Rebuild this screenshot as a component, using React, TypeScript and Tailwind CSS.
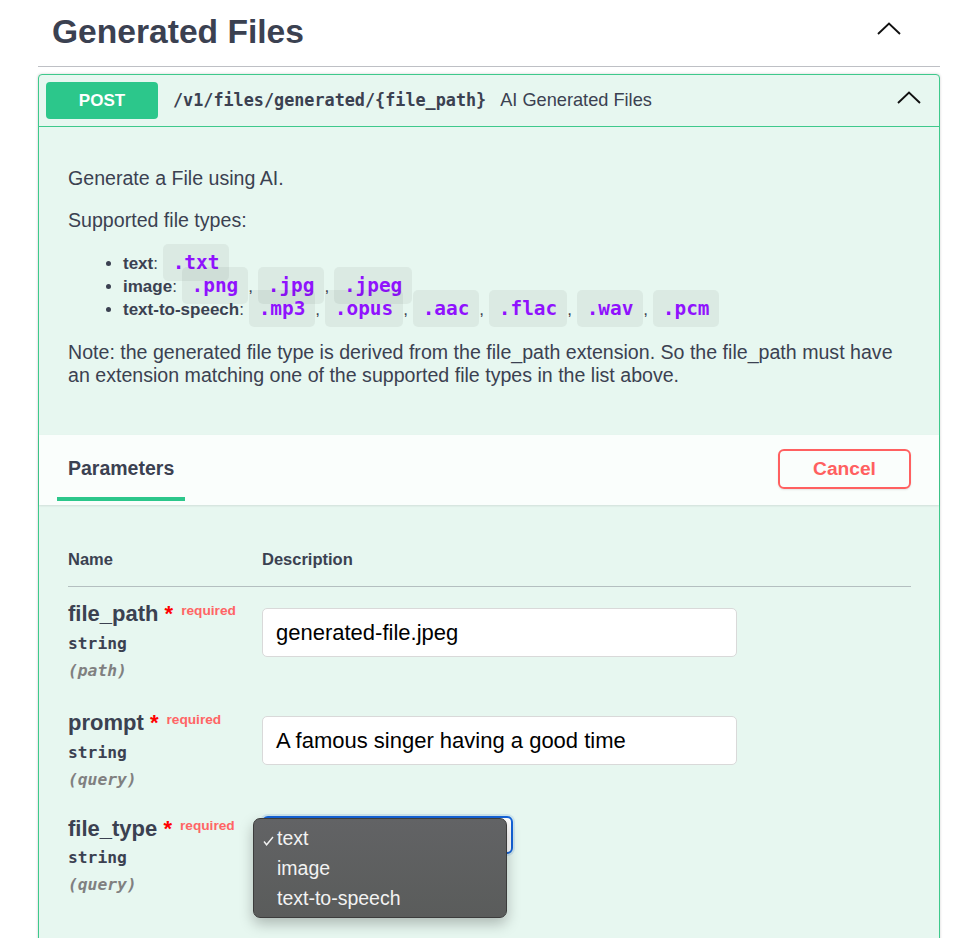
import React from "react";

function Chevron() {
  return (
    <svg width="24" height="13" viewBox="0 0 24 13" fill="none">
      <path d="M1 12L12 1.5L23 12" stroke="#111" strokeWidth="1.9" />
    </svg>
  );
}

function Code({ children }: { children: React.ReactNode }) {
  return (
    <code className="font-['DejaVu_Sans_Mono',monospace] font-bold text-[19.4px] leading-none text-[#9012fe] bg-[rgba(0,0,0,0.05)] rounded-[5px] px-[10px] py-[7px]">
      {children}
    </code>
  );
}

function ParamName({ name, type, where }: { name: string; type: string; where: string }) {
  return (
    <div className="w-[194px] shrink-0">
      <div className="text-[22px] leading-[26px] font-bold text-[#3b4151] whitespace-nowrap">
        {name}
        <span className="text-[#ff0000]">&nbsp;*</span>
        <span className="relative -top-[6px] pl-[8px] text-[13.7px] leading-none text-[#ff6565]">required</span>
      </div>
      <div className="mt-[2.5px] leading-[27px] font-['DejaVu_Sans_Mono',monospace] font-bold text-[16.3px] text-[#3b4151]">
        {type}
      </div>
      <div className="leading-[27px] font-['DejaVu_Sans_Mono',monospace] font-bold italic text-[16.3px] text-[#808080]">
        ({where})
      </div>
    </div>
  );
}

function TextBox({ value, top }: { value: string; top: string }) {
  return (
    <div className={`${top} w-[475px] h-[49px] rounded-[5px] border border-[#d9d9d9] bg-white px-[13px] flex items-center text-[22px] text-black`}>
      {value}
    </div>
  );
}

export default function App() {
  return (
    <div className="w-[978px] h-[938px] overflow-hidden bg-white font-['Liberation_Sans',Arial,sans-serif] text-[#3b4151]">
      <div className="px-[38px]">
        {/* Tag heading */}
        <div className="h-[67px] border-b border-[#bec0c5] pl-[14px] pr-[39px] pb-[2px] flex items-center">
          <h3 className="flex-1 text-[33.6px] font-bold leading-none">Generated Files</h3>
          <div className="mb-[8px] flex">
            <Chevron />
          </div>
        </div>

        {/* Opblock */}
        <div className="mt-[7px] h-[900px] border border-[#3ec98c] rounded-[4px] bg-[#e7f7f0] shadow-[0_0_3px_rgba(0,0,0,0.19)]">
          {/* Summary */}
          <div className="flex items-center px-[7px] py-[7px] border-b border-[#3ec98c]">
            <div className="w-[112px] h-[37px] rounded-[4px] bg-[#2cc78b] text-white font-bold text-[17px] flex items-center justify-center">
              POST
            </div>
            <div className="ml-[15px] font-['DejaVu_Sans_Mono',monospace] font-bold text-[16.8px] text-[#3b4151]">
              /v1/files/generated/{"{file_path}"}
            </div>
            <div className="ml-[14px] flex-1 text-[18.2px] text-[#3b4151]">AI Generated Files</div>
            <div className="mr-[11px] mb-[7px] flex">
              <Chevron />
            </div>
          </div>

          {/* Description */}
          <div className="pl-[29px] pr-[28px] pt-[40px] pb-[48px]">
            <p className="text-[19.6px] leading-[23px] mb-[19px]">Generate a File using AI.</p>
            <p className="text-[19.6px] leading-[23px] mb-[20px]">Supported file types:</p>
            <ul className="list-disc pl-[55px] text-[17px] leading-[23px] mb-[20px]">
              <li>
                <strong>text</strong>: <Code>.txt</Code>
              </li>
              <li>
                <strong>image</strong>: <Code>.png</Code>, <Code>.jpg</Code>, <Code>.jpeg</Code>
              </li>
              <li>
                <strong>text-to-speech</strong>: <Code>.mp3</Code>, <Code>.opus</Code>, <Code>.aac</Code>,{" "}
                <Code>.flac</Code>, <Code>.wav</Code>, <Code>.pcm</Code>
              </li>
            </ul>
            <p className="text-[19.6px] leading-[23px] whitespace-nowrap">
              Note: the generated file type is derived from the file_path extension. So the file_path must have
              <br />
              an extension matching one of the supported file types in the list above.
            </p>
          </div>

          {/* Parameters header */}
          <div className="h-[70px] flex items-stretch justify-between pl-[18px] pr-[28px] bg-[rgba(255,255,255,0.8)] shadow-[0_1px_2px_rgba(0,0,0,0.1)]">
            <div className="pt-[6px] mb-[4px] px-[11px] border-b-4 border-[#2cc78b] flex items-center text-[19.5px] font-bold">
              Parameters
            </div>
            <div className="self-center -mt-[2px] w-[133px] h-[40px] rounded-[6px] border-2 border-[#ff6060] shadow-[0_1px_2px_rgba(0,0,0,0.1)] flex items-center justify-center text-[19.2px] font-bold text-[#ff6060]">
              Cancel
            </div>
          </div>

          {/* Table */}
          <div className="pl-[29px] pr-[28px] pt-[44px]">
            <div className="flex pb-[17px] border-b border-[#b4bfc0] text-[16.5px] leading-[20px] font-bold">
              <div className="w-[194px]">Name</div>
              <div>Description</div>
            </div>

            <div className="flex items-start pt-[14px] pb-[12.5px]">
              <ParamName name="file_path" type="string" where="path" />
              <TextBox value="generated-file.jpeg" top="mt-[7px]" />
            </div>

            <div className="flex items-start pt-[14px] pb-[10px]">
              <ParamName name="prompt" type="string" where="query" />
              <TextBox value="A famous singer having a good time" top="mt-[6px]" />
            </div>

            <div className="flex items-start pt-[13px]">
              <ParamName name="file_type" type="string" where="query" />
              <div className="relative w-[251px] h-[38px] rounded-[6px] border-2 border-[#1463d8] bg-white shadow-[0_0_0_2px_rgba(20,99,216,0.12)]">
                <div className="absolute left-[-11px] top-0 w-[254px] h-[100px] rounded-[7px] border border-[#3c3c3c] bg-gradient-to-b from-[#626365] to-[#5a5c5b] shadow-[0_6px_14px_rgba(0,0,0,0.25)] py-[4px] text-[19.5px] leading-[30px] text-[#f2f2f2]">
                  <div className="flex items-center">
                    <div className="w-[23px] pl-[9px] flex items-center">
                      <svg width="11" height="10" viewBox="0 0 11 10" fill="none" className="mt-[6px]">
                        <path d="M1 5.5L3.6 8.8L10 1" stroke="#f2f2f2" strokeWidth="1.4" />
                      </svg>
                    </div>
                    <span>text</span>
                  </div>
                  <div className="pl-[23px]">image</div>
                  <div className="pl-[23px]">text-to-speech</div>
                </div>
              </div>
            </div>
          </div>
        </div>
      </div>
    </div>
  );
}
